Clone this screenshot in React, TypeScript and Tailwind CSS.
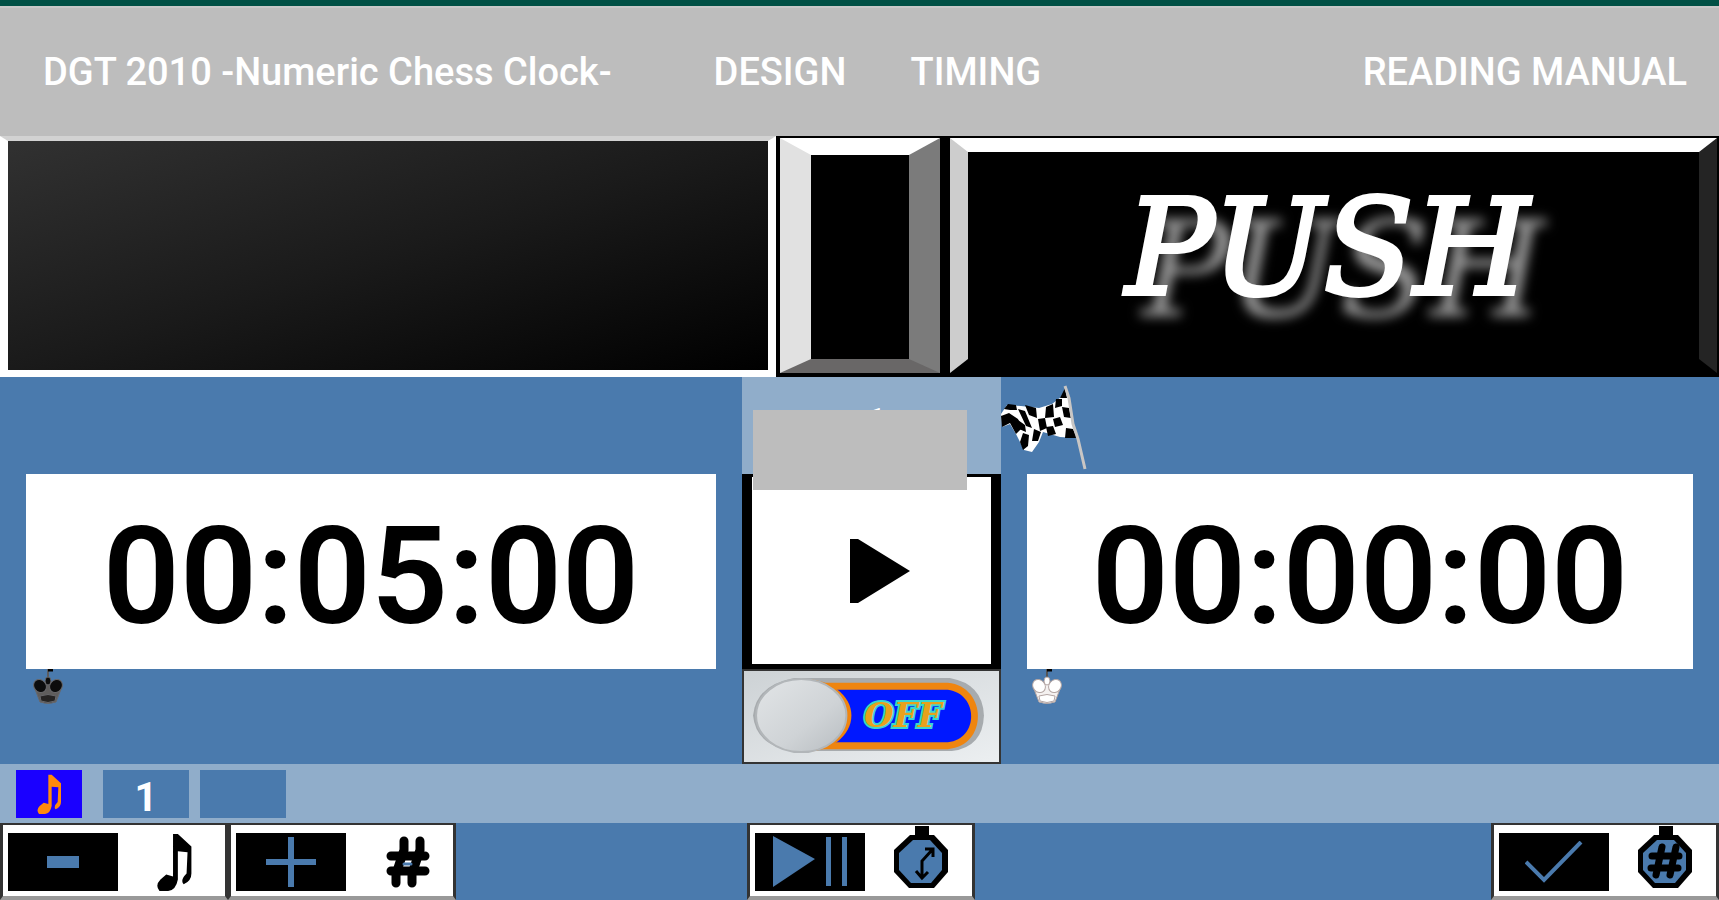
import React, { useState } from 'react';

const HashMark: React.FC<{ className?: string }> = ({ className }) => (
  <svg viewBox="0 0 44 52" className={className} fill="none" stroke="black" strokeLinecap="round" aria-hidden="true">
    <path d="M18 5 V14 L10 38 V47 M34 5 V14 L26 38 V47" strokeWidth="9" />
    <path d="M5 20 H39 M5 35 H39" strokeWidth="9" />
    <path d="M18 28 h7" stroke="#4a7aad" strokeWidth="3" />
  </svg>
);

const Note: React.FC<{ className?: string }> = ({ className }) => (
  <svg viewBox="0 0 36 60" className={className} fill="currentColor" aria-hidden="true">
    <path d="M17 1 L22 1 L36 14 L36 42 Q36 50 28 53 Q24 49 31 42 L32 20 L22 19 L22 48 Q20 59 12 60 L3 60 Q-2 54 4 48 L10 43 L17 45 Z" />
  </svg>
);

const Stopwatch: React.FC<{ children: React.ReactNode }> = ({ children }) => (
  <svg viewBox="0 0 54 64" className="-mt-2 h-16 w-[54px] shrink-0" aria-hidden="true">
    <rect x="21" y="0" width="14" height="14" fill="black" />
    <path d="M16 9 H40 L54 24 V46 L40 62 H15 L0 46 V24 Z" fill="black" />
    <path d="M19 14 H36 L48 27 V44 L37 57 H17 L5 44 V27 Z" fill="#4a7aad" />
    {children}
  </svg>
);

const Flag = () => (
  <svg viewBox="0 0 86 86" className="h-[86px] w-[86px]" aria-hidden="true">
    <path d="M0 29 L6 20 L20 21 L38 23 L51 19 L60 12 L65 3 L75 53 L59 52 L42 47 L38 57 L31 67 L23 65 L15 49 L9 39 L1 42 Z" fill="white" />
    <g fill="black">
      <path d="M59 13 L64 3 L66 13 Z M3 24 L7 19 L15 20 L16 25 L9 25 Z M0 31 L8 28 L17 34 L21 43 L15 49 L9 38 L1 42 Z" />
      <path d="M45 22 L52 19 L53 32 L44 33 Z M24 20 L35 23 L36 33 L28 30 Z M37 34 L44 33 L46 43 L39 46 Z" />
      <path d="M52 34 L59 32 L62 40 L54 42 Z M61 22 L68 23 L70 33 L63 32 Z M55 14 L61 14 L61 21 L54 23 Z" />
      <path d="M45 42 L52 41 L55 49 L47 51 Z M65 43 L72 44 L76 53 L64 53 Z M17 24 L24 26 L31 43 L25 41 Z" />
      <path d="M33 44 L40 47 L37 56 L31 56 Z M22 48 L28 50 L27 61 L22 65 L19 57 Z M17 35 L24 40 L25 47 L18 44 Z" />
    </g>
    <path d="M64 1 L68 13 L72 39 L77 54 L84 84" fill="none" stroke="#c9c6c4" strokeWidth="3" />
  </svg>
);

const King: React.FC<{ dark?: boolean }> = ({ dark }) => (
  <svg viewBox="0 0 32 36" className="h-9 w-8" aria-hidden="true">
    <path d="M16 0 V10" stroke={dark ? '#5c5c60' : '#555555'} strokeWidth="2" />
    <path d="M16 1 h5" stroke="black" strokeWidth="3" />
    <g fill={dark ? '#0c0c0c' : '#ffffff'} stroke={dark ? '#68686b' : '#b3a5a3'} strokeWidth="1">
      <path d="M3 20 L16 14 L29 20 L24 33 Q16 36 8 33 Z" fill={dark ? '#5f5d5c' : '#f4f1f0'} />
      <ellipse cx="8" cy="17" rx="6" ry="7" transform="rotate(-40 8 17)" />
      <ellipse cx="24" cy="17" rx="6" ry="7" transform="rotate(40 24 17)" />
      <ellipse cx="16" cy="12" rx="3" ry="4" />
      <path d="M8 27 Q16 24 24 27 L23 32 Q16 35 9 32 Z" fill={dark ? '#262423' : '#ffffff'} />
    </g>
  </svg>
);

interface KeyProps {
  label: string;
  symbol: React.ReactNode;
  icon: React.ReactNode;
}

const Key: React.FC<KeyProps> = ({ label, symbol, icon }) => (
  <button
    aria-label={label}
    className="flex h-[77px] w-[228px] border-x-3 border-t-2 border-b-4 border-x-[#333] border-t-[#333] border-b-[#999] bg-white pt-2 pl-[5px]"
  >
    <span className="flex h-[58px] w-[110px] items-center justify-center bg-black text-[#4a7aad]">{symbol}</span>
    <span className="flex h-[58px] flex-1 items-center justify-center pl-1">{icon}</span>
  </button>
);

const TimeBox: React.FC<{ label: string; value: string }> = ({ label, value }) => (
  <div
    role="timer"
    aria-label={label}
    className="mx-[26px] flex h-[195px] items-center justify-center bg-white pt-3 text-[135px] leading-none font-semibold text-black"
  >
    {value}
  </div>
);

export default function App() {
  const [running, setRunning] = useState(false);

  return (
    <div className="min-h-screen bg-[#4a7aad] font-['Roboto',sans-serif]">
      <header className="border-t-6 border-[#005045] bg-[#bdbdbd]">
        <nav className="flex h-[130px] items-center border-t-2 border-[#c8c8c8] pt-px pr-8 pl-[43px] text-[38px] font-medium text-white">
          <h1>DGT 2010 -Numeric Chess Clock-</h1>
          <a href="#design" className="ml-[102px]">DESIGN</a>
          <a href="#timing" className="ml-16">TIMING</a>
          <a href="#manual" className="ml-auto">READING MANUAL</a>
        </nav>
      </header>

      {/* Levers */}
      <section className="grid h-[241px] grid-cols-[776fr_168fr_775fr]">
        <button
          aria-label="Left lever"
          className="border-x-8 border-t-5 border-b-7 border-white border-t-[#d2d2d2] bg-linear-to-br/srgb from-[#313131] via-[#1a1a1a] to-black"
        />
        <div className="border-4 border-t-2 border-black bg-black">
          <div className="h-full border-x-31 border-t-17 border-b-14 border-t-white border-r-[#7b7b7b] border-b-[#696767] border-l-[#e1e1e1] bg-black" />
        </div>
        <div className="border-x-2 border-t-2 border-b-4 border-black bg-black pl-1">
          <button className="flex h-full w-full items-center justify-center border-x-18 border-t-14 border-b-14 border-t-white border-r-[#242424] border-b-black border-l-[#cdcdcd] bg-black pr-3 pb-4 font-['DejaVu_Serif',serif] text-[132px] leading-none text-white italic [-webkit-text-stroke:4px_white] [text-shadow:16px_22px_12px_#999]">
            PUSH
          </button>
        </div>
      </section>

      {/* Clocks */}
      <main className="grid grid-cols-[742fr_259fr_718fr]">
        <section className="pt-[97px]">
          <TimeBox label="Left time" value="00:05:00" />
          <div className="h-[95px] pl-8">
            <King dark />
          </div>
        </section>

        <section>
          <div className="relative h-[97px] bg-[#90adca] pt-[27px] pl-2 text-center text-[40px] leading-10 font-bold text-white">
            1
            <div className="absolute top-[33px] left-[11px] h-20 w-[214px] bg-[#bdbdbd]" />
          </div>
          <button
            aria-label="Start"
            className="flex h-[195px] w-full items-center justify-center border-x-10 border-t-3 border-b-5 border-black bg-white pl-4"
          >
            <svg viewBox="0 0 60 66" className="h-[66px] w-[60px]" aria-hidden="true">
              <path d="M0 1 L8 1 L60 33 L8 65 L0 65 Z" fill="black" />
            </svg>
          </button>
          <label className="relative block h-[95px] border-2 border-[#343434] bg-linear-to-br from-[#cdd2d5] to-[#eceff1]">
            <input
              type="checkbox"
              role="switch"
              aria-label="Sound"
              checked={running}
              onChange={(e) => setRunning(e.target.checked)}
              className="absolute inset-0 h-full w-full opacity-0"
            />
            <svg viewBox="0 0 254 92" preserveAspectRatio="none" className="h-full w-full" aria-hidden="true">
              <defs>
                <linearGradient id="knob" x1="0" y1="0" x2="1" y2="1">
                  <stop offset="0" stopColor="#e2e5e7" />
                  <stop offset="0.6" stopColor="#cfd3d6" />
                  <stop offset="1" stopColor="#b7bcc0" />
                </linearGradient>
              </defs>
              <path d="M50 7 H205 Q238 13 239 45 Q238 77 207 81 H50 Q12 76 9 45 Q12 14 50 7 Z" fill="#a7abae" />
              <path d="M65 12 H203 C243 16 243 76 203 79 H65 Z" fill="#ef8510" />
              <path d="M70 19 H203 C234 23 234 69 203 72 H70 Z" fill="#0018ff" />
              <ellipse cx="60" cy="45" rx="47" ry="37" fill="#ef8510" />
              <ellipse cx="57" cy="45" rx="45" ry="37" fill="url(#knob)" stroke="#b2b6b9" strokeWidth="2" />
            </svg>
            <span className="absolute top-6 left-30 font-['DejaVu_Serif',serif] text-[34px] leading-10 font-bold text-[#e8a11c] italic [-webkit-text-stroke:4px_#3bd5cf] [paint-order:stroke_fill]">
              OFF
            </span>
          </label>
        </section>

        <section>
          <div className="h-[97px] pt-2">
            <Flag />
          </div>
          <TimeBox label="Right time" value="00:00:00" />
          <div className="h-[95px] pl-[30px]">
            <King />
          </div>
        </section>
      </main>

      {/* Status strip */}
      <section className="flex h-[59px] items-center bg-[#90adca] pl-4">
        <div className="flex h-12 w-[66px] items-center justify-center bg-[#1a00ff] text-[#ff8a0c]">
          <Note className="h-10 w-6" />
        </div>
        <div className="ml-[21px] flex h-12 w-[86px] items-center justify-center bg-[#4a7aad] pt-2 text-[40px] leading-10 font-bold text-white">1</div>
        <div className="ml-[11px] h-12 w-[86px] bg-[#4a7aad]" />
      </section>

      <footer className="grid grid-cols-[747fr_972fr]">
        <div className="flex">
          <Key
            label="Decrease melody"
            symbol={<span className="h-3 w-8 bg-[#4a7aad]" />}
            icon={<Note className="h-[58px] w-9" />}
          />
          <Key
            label="Increase number"
            symbol={
              <svg viewBox="0 0 50 50" className="h-[50px] w-[50px]" stroke="currentColor" strokeWidth="6" aria-hidden="true">
                <path d="M25 0 V50 M0 25 H50" />
              </svg>
            }
            icon={<HashMark className="ml-3 h-[52px] w-11" />}
          />
        </div>
        <div className="flex justify-between">
          <Key
            label="Start or pause"
            symbol={
              <svg viewBox="0 0 74 52" className="h-[52px] w-[74px]" fill="currentColor" aria-hidden="true">
                <path d="M0 0 L42 23 L0 51 Z M53 1 h5 v49 h-5 Z M69 1 h5 v49 h-5 Z" />
              </svg>
            }
            icon={
              <Stopwatch>
                <path d="M28 51 V35 L38 24 M31 23 H39 V31 M22 45 L28 52 L34 46" fill="none" stroke="black" strokeWidth="3" />
              </Stopwatch>
            }
          />
          <Key
            label="Confirm"
            symbol={
              <svg viewBox="0 0 58 42" className="h-[42px] w-[58px]" fill="none" stroke="currentColor" strokeWidth="4" aria-hidden="true">
                <path d="M1 21 L19 39 L56 1" />
              </svg>
            }
            icon={
              <Stopwatch>
                <path d="M24 21 L18 49 M38 21 L32 49 M14 30 H41 M13 42 H40" fill="none" stroke="black" strokeWidth="7" strokeLinecap="round" />
              </Stopwatch>
            }
          />
        </div>
      </footer>
    </div>
  );
}
